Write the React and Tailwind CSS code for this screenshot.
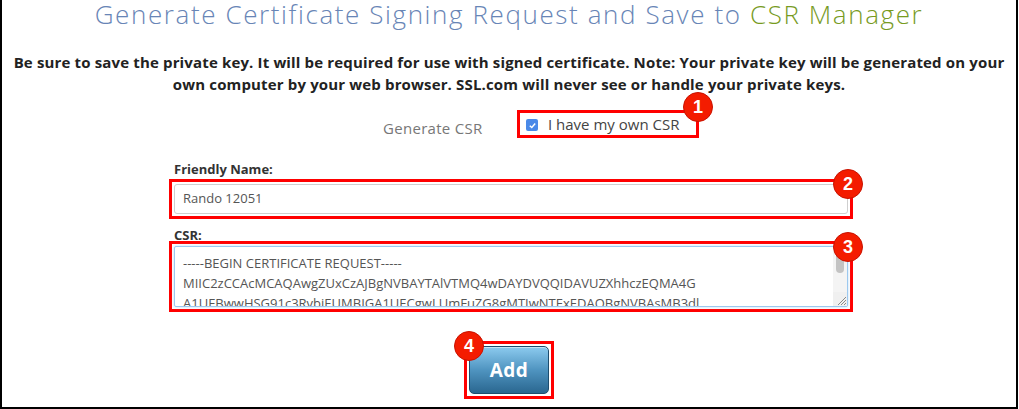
import React from "react";

function Badge({ n, className }) {
  return (
    <span
      className={
        "absolute flex h-[30px] w-[30px] items-center justify-center rounded-full border border-[#c81200] bg-[#f41c00] text-[18px] font-bold leading-none text-white " +
        className
      }
      style={{ fontFamily: '"Liberation Sans", Arial, sans-serif' }}
    >
      {n}
    </span>
  );
}

export default function App() {
  const sans = { fontFamily: '"Open Sans", "Liberation Sans", sans-serif' };
  return (
    <div
      className="flex h-[409px] w-[1018px] flex-col items-center border-b-2 border-l-2 border-r-2 border-black bg-white"
      style={sans}
    >
      <h1 className="mt-0 whitespace-nowrap text-center text-[26px] font-light leading-[28px] tracking-[1.6px] text-[#6885b6]">
        Generate Certificate Signing Request and Save to{" "}
        <span className="text-[#789b1f]">CSR Manager</span>
      </h1>

      <p className="mt-[23px] w-full whitespace-nowrap px-[4px] text-center text-[15px] font-bold leading-[22px] tracking-[0.15px] text-[#222]">
        Be sure to save the private key. It will be required for use with signed certificate. Note: Your private key will be generated on your
        <br />
        own computer by your web browser. SSL.com will never see or handle your private keys.
      </p>

      <div className="mt-[15px] flex w-full items-center pl-[381px]">
        <span className="mt-[8px] w-[134px] text-[15px] leading-[20px] tracking-[0.3px] text-[#777]">Generate CSR</span>
        <div className="relative flex h-[28px] w-[182px] items-center border-[3px] border-[#ff0000] pl-[6px]">
          <span className="mt-[2px] flex h-[12px] w-[12px] items-center justify-center rounded-[2px] bg-[#4a89e8]">
            <svg width="9" height="9" viewBox="0 0 10 10">
              <path d="M2 5.2 L4.2 7.3 L8 2.8" fill="none" stroke="white" strokeWidth="1.6" />
            </svg>
          </span>
          <span className="ml-[10px] text-[15px] leading-[20px] text-[#444]">I have my own CSR</span>
          <Badge n="1" className="-right-[17px] -top-[21px]" />
        </div>
      </div>

      <div className="mt-[23px] flex w-full flex-col pl-[167px]">
        <div className="w-[684px]">
          <div className="pl-[5px] text-[13px] font-bold leading-[16px] text-[#333]">Friendly Name:</div>
          <div className="relative mt-[2px] border-[3px] border-[#ff0000] p-[2px]">
            <div className="flex h-[30px] items-center rounded-[3px] border border-[#cfcfcf] bg-white pl-[8px] text-[13px] text-[#555]">
              Rando 12051
            </div>
            <Badge n="2" className="-right-[13px] -top-[13px]" />
          </div>

          <div className="mt-[9px] pl-[5px] text-[13px] font-bold leading-[14px] text-[#333]">CSR:</div>
          <div className="relative mt-[-1px] border-[3px] border-[#ff0000] p-[2px]">
            <div className="flex h-[61px] overflow-hidden rounded-[2px] border border-[#9cc8ee] bg-white shadow-[0_0_3px_#b9dbf7]">
              <div className="flex-1 overflow-hidden whitespace-nowrap pl-[8px] pt-[6px] text-[13px] leading-[20px] text-[#555]">
                <div>-----BEGIN CERTIFICATE REQUEST-----</div>
                <div>MIIC2zCCAcMCAQAwgZUxCzAJBgNVBAYTAlVTMQ4wDAYDVQQIDAVUZXhhczEQMA4G</div>
                <div>A1UEBwwHSG91c3RvbjEUMBIGA1UECgwLUmFuZG8gMTIwNTExEDAOBgNVBAsMB3dl</div>
              </div>
              <div className="flex w-[14px] flex-col bg-[#f4f4f4]">
                <div className="mx-auto mt-[2px] h-[24px] w-[8px] rounded-[4px] bg-[#c3c3c3]" />
                <div className="flex-1" />
                <div className="flex h-[14px] items-end justify-end bg-[#f0f0f0]">
                  <svg width="12" height="12" viewBox="0 0 12 12">
                    <path d="M11 3 L3 11 M11 6 L6 11 M11 9 L9 11" stroke="#8a8a8a" strokeWidth="1" fill="none" />
                  </svg>
                </div>
              </div>
            </div>
            <Badge n="3" className="-right-[13px] -top-[12px]" />
          </div>
        </div>
      </div>

      <div className="relative mt-[29px] border-[3px] border-[#ff0000] p-[2px]">
        <button className="flex h-[48px] w-[80px] items-center justify-center rounded-[5px] border border-[#1d4d6e] bg-gradient-to-b from-[#8ccbef] via-[#4f94c0] to-[#2a6790] text-[19px] font-bold tracking-[0.5px] text-white shadow-[inset_0_1px_0_rgba(255,255,255,0.5)]">
          Add
        </button>
        <Badge n="4" className="-left-[13px] -top-[13px]" />
      </div>
    </div>
  );
}
